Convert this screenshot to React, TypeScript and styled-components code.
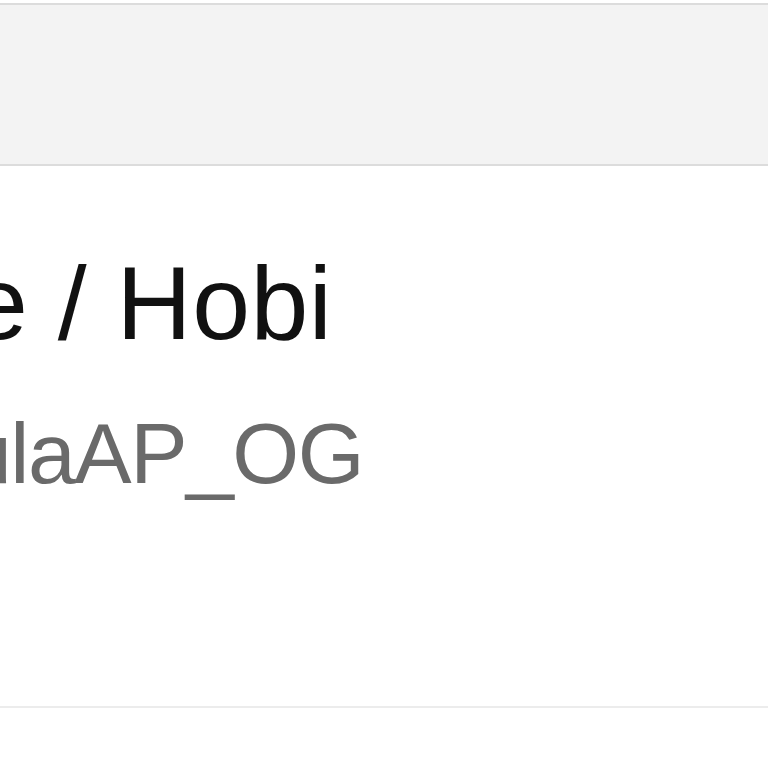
import React from "react";
import styled, { createGlobalStyle } from "styled-components";

const GlobalStyle = createGlobalStyle`
  html, body {
    margin: 0;
    padding: 0;
    background: #ffffff;
  }
  body {
    font-family: "Liberation Sans", Arial, Helvetica, sans-serif;
  }
`;

const Page = styled.div`
  min-height: 768px;
  padding-top: 3px;
  background: #ffffff;
  overflow: hidden;
`;

const Toolbar = styled.header`
  height: 159px;
  background: #f3f3f3;
  border-top: 2px solid #dcdcdc;
  border-bottom: 2px solid #dcdcdc;
`;

const Cell = styled.section`
  height: 463px;
  padding-top: 77px;
  border-bottom: 2px solid #ececec;
  display: flex;
  flex-direction: column;
  gap: 40px;
  white-space: nowrap;
`;

const Title = styled.h1<{ $shift: number }>`
  margin: 0 0 0 ${(p) => p.$shift}px;
  font-size: 104px;
  line-height: 120px;
  font-weight: 400;
  letter-spacing: 0.5px;
  color: #111111;
`;

const Subtitle = styled.p<{ $shift: number }>`
  margin: 0 0 0 ${(p) => p.$shift}px;
  font-size: 86px;
  line-height: 100px;
  font-weight: 400;
  letter-spacing: -1.5px;
  color: #6a6a6a;
`;

type Item = {
  category: string;
  handle: string;
};

const item: Item = {
  category: "e / Hobi",
  handle: "ulaAP_OG",
};

const App: React.FC = () => {
  return (
    <Page>
      <GlobalStyle />
      <Toolbar />
      <Cell>
        <Title $shift={-30}>{item.category}</Title>
        <Subtitle $shift={-36}>{item.handle}</Subtitle>
      </Cell>
    </Page>
  );
};

export default App;
